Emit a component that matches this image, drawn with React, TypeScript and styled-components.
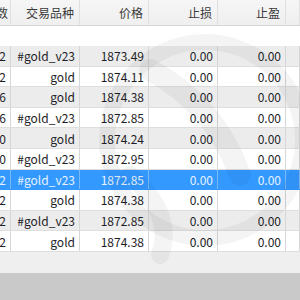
import React from "react";
import styled, { createGlobalStyle, css } from "styled-components";

const Global = createGlobalStyle`
  html, body { margin: 0; padding: 0; background: #ffffff; }
  body { width: 300px; height: 300px; overflow: hidden; }
  #root { width: 300px; height: 300px; }
`;

const COLS = "11px 69px 69px 69px 68px 1fr";

const Page = styled.div`
  position: relative;
  width: 300px;
  height: 300px;
  display: flex;
  flex-direction: column;
  overflow: hidden;
  background: #ffffff;
  font-family: "Noto Sans CJK SC", "Noto Sans", sans-serif;
  font-size: 12px;
`;

const HeaderRow = styled.div`
  display: grid;
  grid-template-columns: ${COLS};
  height: 25px;
  flex: none;
  background: linear-gradient(#f6f6f6, #efefef);
  border-bottom: 1px solid #d6d6d6;
`;

const HeadCell = styled.div`
  display: flex;
  align-items: center;
  justify-content: flex-end;
  padding-right: 5px;
  overflow: hidden;
  white-space: nowrap;
  color: #3a3a3a;
  border-right: 1px solid #e0e0e0;
  min-width: 0;
  &:first-child { padding-right: 2px; }
`;

const Blank = styled.div`
  height: 20px;
  flex: none;
  background: #ffffff;
`;

const Body = styled.div`
  display: flex;
  flex-direction: column;
  flex: none;
`;

const Row = styled.div<{ $alt: boolean; $sel: boolean }>`
  display: grid;
  grid-template-columns: ${COLS};
  height: 20.6px;
  box-sizing: border-box;
  border-bottom: 1px solid #dedede;
  background: ${(p) => (p.$alt ? "#ececec" : "#ffffff")};
  color: #1e1e28;
  ${(p) =>
    p.$sel &&
    css`
      background: #3399ff;
      color: #e6f2ff;
      border-bottom-color: #3399ff;
    `}
`;

const Cell = styled.div<{ $sel: boolean }>`
  display: flex;
  align-items: center;
  justify-content: flex-end;
  padding-right: 4px;
  overflow: hidden;
  white-space: nowrap;
  min-width: 0;
  border-right: 1px solid ${(p) => (p.$sel ? "#7ab8f5" : "#d6d6d6")};
`;

const Track = styled.div`
  height: 21px;
  flex: none;
  background: #efefef;
`;

const Frame = styled.div`
  flex: 1;
  background: #c9c9c9;
`;

const Watermark = styled.svg`
  position: absolute;
  left: 0;
  top: 0;
  width: 300px;
  height: 300px;
  pointer-events: none;
`;

const headers = ["手数", "交易品种", "价格", "止损", "止盈", ""];

const rows: [string, string, string][] = [
  ["2", "#gold_v23", "1873.49"],
  ["2", "gold", "1874.11"],
  ["6", "gold", "1874.38"],
  ["6", "#gold_v23", "1872.85"],
  ["0", "gold", "1874.24"],
  ["0", "#gold_v23", "1872.95"],
  ["2", "#gold_v23", "1872.85"],
  ["2", "gold", "1874.38"],
  ["2", "#gold_v23", "1872.85"],
  ["2", "gold", "1874.38"],
];

const SELECTED = 6;

export default function App() {
  return (
    <>
      <Global />
      <Page>
        <HeaderRow>
          {headers.map((h, i) => (
            <HeadCell key={i}>{h}</HeadCell>
          ))}
        </HeaderRow>
        <Blank />
        <Body>
          {rows.map((r, i) => {
            const sel = i === SELECTED;
            return (
              <Row key={i} $alt={i % 2 === 0} $sel={sel}>
                <Cell $sel={sel}>{r[0]}</Cell>
                <Cell $sel={sel}>{r[1]}</Cell>
                <Cell $sel={sel}>{r[2]}</Cell>
                <Cell $sel={sel}>0.00</Cell>
                <Cell $sel={sel}>0.00</Cell>
                <Cell $sel={sel}></Cell>
              </Row>
            );
          })}
        </Body>
        <Track />
        <Frame />
        <Watermark viewBox="0 0 300 300">
          <g fill="none" stroke="rgba(0,0,0,0.045)" strokeLinecap="round">
            <circle cx="205" cy="140" r="98" strokeWidth="16" />
            <path d="M150 70 Q215 105 240 175" strokeWidth="22" />
            <path d="M130 175 Q175 215 160 255" strokeWidth="18" />
          </g>
        </Watermark>
      </Page>
    </>
  );
}
